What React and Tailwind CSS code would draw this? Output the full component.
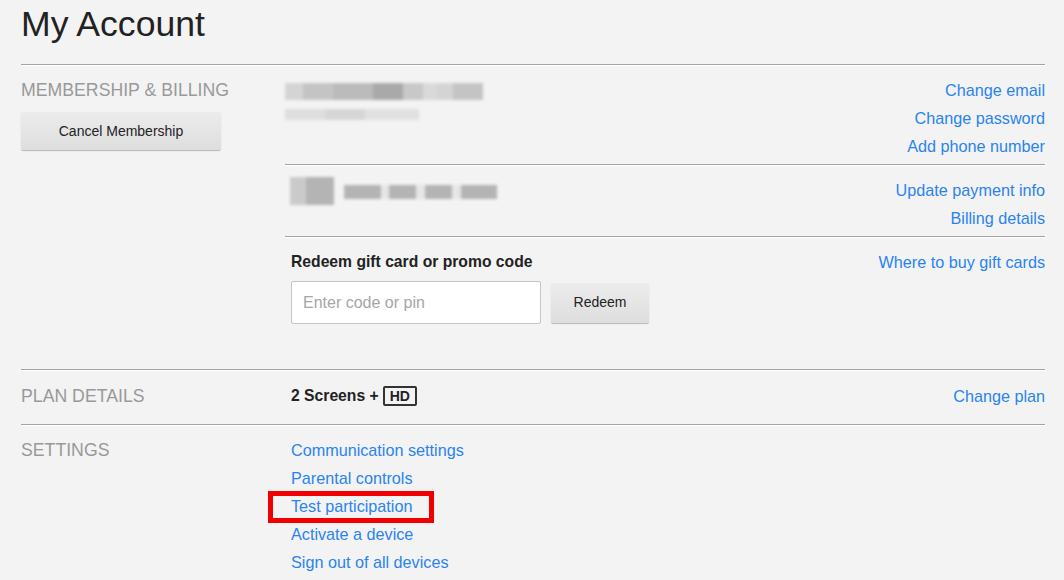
// Página "My Account" com seções de assinatura, plano e configurações

const linkClass = "block text-[16.2px] leading-[28px] text-[#2a83f0] hover:underline";

// Linha divisória com sulco claro por baixo
function Divider() {
  return <div className="h-[2px] border-t border-b border-t-[#a3a3a3] border-b-white" />;
}

// Bloco borrado que imita um dado pessoal ocultado
function Blur({ widths, h = "h-[8px]", tones }) {
  return (
    <div className="flex blur-[1.5px]">
      {widths.map((w, i) => (
        <div key={i} className={h} style={{ width: w, background: tones[i % tones.length] }} />
      ))}
    </div>
  );
}

function SectionLabel({ children }) {
  return (
    <div className="text-[17.7px] leading-[28px] text-[#999] uppercase">{children}</div>
  );
}

function GrayButton({ children, className }) {
  return (
    <button
      className={`
        bg-gradient-to-b from-[#ececec] to-[#dedede]
        text-[14px] text-[#222]
        shadow-[0_1px_1px_rgba(0,0,0,0.25)] rounded-[2px]
        ${className}
      `}
    >
      {children}
    </button>
  );
}

export default function App() {
  return (
    <div className="min-h-[580px] bg-[#f3f3f3] pl-[21px] pr-[19px] font-['Liberation_Sans',Arial,sans-serif] overflow-hidden">
      {/* Título */}
      <h1 className="pt-[4px] h-[64px] text-[35.6px] leading-[40px] text-[#222]">My Account</h1>
      <Divider />

      {/* Membership & billing */}
      <div className="flex">
        <div className="w-[264px] pt-[10px]">
          <SectionLabel>Membership &amp; Billing</SectionLabel>
          <GrayButton className="mt-[8px] w-[200px] h-[38px]">Cancel Membership</GrayButton>
        </div>
        <div className="flex-1">
          {/* Email e senha */}
          <div className="flex justify-between pt-[10px] pb-[4px]">
            <div className="pt-[7px]">
              <Blur
                widths={[18, 30, 40, 30, 20, 14, 16, 30]}
                h="h-[17px]"
                tones={["#d4d4d4", "#c4c4c4", "#bbb", "#a9a9a9", "#c8c8c8", "#d9d9d9"]}
              />
              <div className="mt-[9px]">
                <Blur widths={[40, 40, 54]} h="h-[11px]" tones={["#dedede", "#d6d6d6", "#e0e0e0"]} />
              </div>
            </div>
            <div className="text-right">
              <a className={linkClass}>Change email</a>
              <a className={linkClass}>Change password</a>
              <a className={linkClass}>Add phone number</a>
            </div>
          </div>
          <Divider />

          {/* Pagamento */}
          <div className="flex justify-between pt-[10px] pb-[4px]">
            <div className="flex items-start pt-[1px] pl-[5px] gap-[10px]">
              <Blur widths={[16, 28]} h="h-[28px]" tones={["#cacaca", "#b4b4b4"]} />
              <div className="pt-[8px]">
                <Blur
                  widths={[37, 8, 27, 9, 27, 9, 36]}
                  h="h-[14px]"
                  tones={["#b4b4b4", "#e6e6e6"]}
                />
              </div>
            </div>
            <div className="text-right">
              <a className={linkClass}>Update payment info</a>
              <a className={linkClass}>Billing details</a>
            </div>
          </div>
          <Divider />

          {/* Cartão presente */}
          <div className="flex justify-between pt-[10px] pb-[45px]">
            <div className="pl-[6px]">
              <div className="text-[15.7px] leading-[28px] font-bold text-[#222]">
                Redeem gift card or promo code
              </div>
              <div className="flex items-center gap-[10px] mt-[5px]">
                <input
                  placeholder="Enter code or pin"
                  className="w-[250px] h-[43px] bg-white border border-[#c6c6c6] rounded-[2px] px-[11px] text-[16px] placeholder:text-[#a6a6a6] outline-none"
                />
                <GrayButton className="w-[98px] h-[40px]">Redeem</GrayButton>
              </div>
            </div>
            <a className={linkClass}>Where to buy gift cards</a>
          </div>
        </div>
      </div>
      <Divider />

      {/* Plan details */}
      <div className="flex pt-[11px] pb-[14px]">
        <div className="w-[264px]">
          <SectionLabel>Plan Details</SectionLabel>
        </div>
        <div className="flex-1 flex justify-between pl-[6px]">
          <div className="flex items-center gap-[4px] text-[15.7px] leading-[28px] font-bold text-[#222]">
            2 Screens +
            <span className="border-2 border-[#333] rounded-[2px] px-[5px] text-[14px] leading-[14px] py-[1px]">HD</span>
          </div>
          <a className={linkClass}>Change plan</a>
        </div>
      </div>
      <Divider />

      {/* Settings */}
      <div className="flex pt-[10px]">
        <div className="w-[264px]">
          <SectionLabel>Settings</SectionLabel>
        </div>
        <div className="flex-1 pl-[6px]">
          <a className={linkClass}>Communication settings</a>
          <a className={linkClass}>Parental controls</a>
          <div className="relative">
            <a className={linkClass}>Test participation</a>
            {/* Destaque vermelho */}
            <div className="absolute left-[-23px] top-[-1px] w-[166px] h-[32px] border-[5px] border-[#f00000]" />
          </div>
          <a className={linkClass}>Activate a device</a>
          <a className={linkClass}>Sign out of all devices</a>
        </div>
      </div>
    </div>
  );
}
